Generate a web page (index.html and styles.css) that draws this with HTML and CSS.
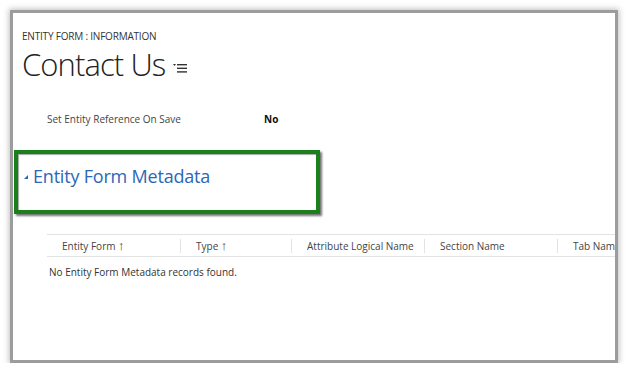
FILE: index.html
```html
<!DOCTYPE html>
<html lang="en">
<head>
    <meta charset="UTF-8">
    <title>Entity Form : Information - Contact Us</title>
    <link rel="stylesheet" href="styles.css">
</head>
<body>
    <div class="frame">
        <div class="form-header">
            <div class="form-type">ENTITY FORM : INFORMATION</div>
            <h1 class="form-title">
                Contact Us
                <svg class="form-menu" width="14" height="10" viewBox="0 0 14 10">
                    <path d="M0 1 L3 1 L1.5 3 Z" fill="#333"/>
                    <rect x="4" y="1" width="10" height="1.4" fill="#333"/>
                    <rect x="4" y="4.6" width="10" height="1.4" fill="#333"/>
                    <rect x="4" y="8.2" width="10" height="1.4" fill="#333"/>
                </svg>
            </h1>
        </div>

        <!-- Поле формы -->
        <div class="field-row">
            <span class="field-label">Set Entity Reference On Save</span>
            <span class="field-value">No</span>
        </div>

        <!-- Секция, выделенная рамкой -->
        <div class="section-box">
            <h2 class="section-title">
                <span class="section-toggle"></span>
                Entity Form Metadata
            </h2>
        </div>

        <div class="grid">
            <div class="grid-head">
                <div class="grid-col">Entity Form <span class="sort">&#8593;</span></div>
                <div class="grid-col">Type <span class="sort">&#8593;</span></div>
                <div class="grid-col">Attribute Logical Name</div>
                <div class="grid-col">Section Name</div>
                <div class="grid-col">Tab Name</div>
            </div>
            <div class="grid-empty">No Entity Form Metadata records found.</div>
        </div>
    </div>
</body>
</html>
```

FILE: styles.css
```css
* {
    margin: 0;
    padding: 0;
    box-sizing: border-box;
}

body {
    font-family: "Open Sans", "Noto Sans", sans-serif;
    background: white;
    color: #333;
}

.frame {
    margin: 10px 0 0 10px;
    width: 608px;
    height: 353px;
    border: 3px solid #9c9c9c;
    box-shadow: 0 0 6px 1px rgba(0,0,0,0.25);
    background: white;
    overflow: hidden;
    padding: 16px 0 0 0;
}

.form-header {
    padding-left: 9px;
}

.form-type {
    font-size: 10px;
    line-height: 14px;
    color: #333;
    letter-spacing: -0.2px;
}

.form-title {
    margin-top: 4px;
    font-size: 31px;
    font-weight: 300;
    line-height: 34px;
    color: #222;
    letter-spacing: -0.9px;
    display: flex;
    align-items: center;
    gap: 8px;
}

.form-menu {
    margin-top: 7px;
}

.field-row {
    display: flex;
    align-items: center;
    padding: 31px 0 0 34px;
    font-size: 10px;
    line-height: 14px;
}

.field-label {
    width: 217px;
    color: #444;
}

.field-value {
    font-weight: 700;
    color: #111;
}

.section-box {
    margin: 24px 0 0 1px;
    width: 306px;
    height: 64px;
    border: 4px solid #1b7f1b;
    box-shadow: 2px 2px 2px rgba(0,0,0,0.55), inset 1px 1px 1px rgba(0,0,0,0.35);
    padding: 10px 0 0 6px;
}

.section-title {
    font-size: 18px;
    font-weight: 400;
    line-height: 24px;
    color: #2c66b8;
    display: flex;
    align-items: center;
    gap: 5px;
    letter-spacing: -0.2px;
}

.section-toggle {
    width: 0;
    height: 0;
    border-left: 4px solid transparent;
    border-bottom: 4px solid #2c66b8;
    margin-top: 2px;
}

.grid {
    margin: 20px 0 0 34px;
}

.grid-head {
    display: grid;
    grid-template-columns: 133px 111px 133px 133px 133px;
    border-top: 1px solid #e3e3e3;
    border-bottom: 1px solid #e3e3e3;
    height: 23px;
    align-items: center;
}

.grid-col {
    font-size: 10px;
    line-height: 14px;
    color: #444;
    padding-left: 15px;
    border-left: 1px solid #e3e3e3;
    white-space: nowrap;
}

.grid-col:first-child {
    border-left: none;
}

.sort {
    font-size: 13px;
    line-height: 10px;
}

.grid-empty {
    font-size: 10px;
    line-height: 14px;
    color: #333;
    padding: 8px 0 0 2px;
}
```
